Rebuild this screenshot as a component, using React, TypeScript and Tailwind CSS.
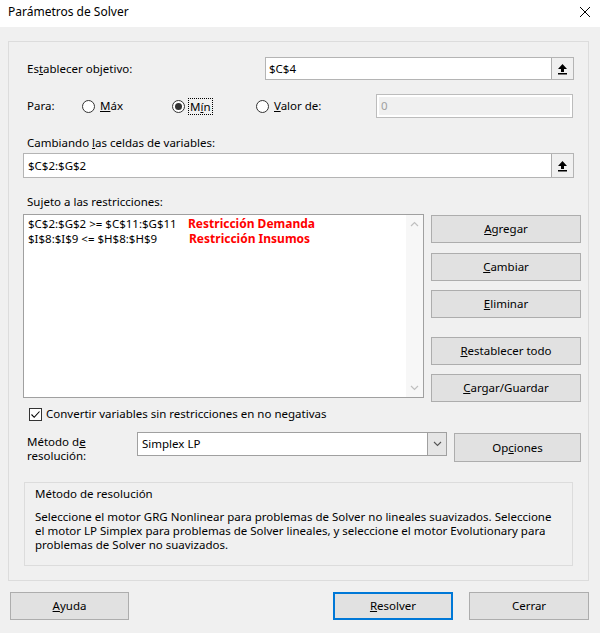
import React from 'react';

const Btn = ({ children, className = '' }: { children: React.ReactNode; className?: string }) => (
  <div className={`flex items-center justify-center h-[28px] bg-[#e1e1e1] border border-[#adadad] text-black ${className}`}>
    {children}
  </div>
);

const Radio = ({ checked }: { checked?: boolean }) => (
  <span className="flex items-center justify-center w-[13px] h-[13px] rounded-full border border-[#333333] bg-white shrink-0">
    {checked && <span className="w-[7px] h-[7px] rounded-full bg-[#333333]" />}
  </span>
);

const RefButton = () => (
  <div className="flex items-center justify-center w-[22px] h-full bg-[#f0f0f0] border-l border-[#adadad]">
    <svg width="11" height="12" viewBox="0 0 11 12">
      <path d="M5.5 1 L10 6 L7 6 L7 9 L4 9 L4 6 L1 6 Z" fill="#000" />
      <rect x="1" y="10" width="9" height="1.5" fill="#000" />
    </svg>
  </div>
);

export default function App() {
  return (
    <div className="w-[600px] h-[633px] bg-[#f0f0f0] text-[11.5px] text-black [font-family:'Noto_Sans',sans-serif] overflow-hidden">
      {/* Title bar */}
      <div className="h-[27px] bg-white flex items-center justify-between pl-[8px] pr-[9px]">
        <span className="text-[12px] -mt-[3px]">Parámetros de Solver</span>
        <svg width="12" height="12" viewBox="0 0 12 12" className="-mt-[3px]">
          <path d="M1 1 L11 11 M11 1 L1 11" stroke="#000" strokeWidth="1" />
        </svg>
      </div>

      {/* Group box */}
      <div className="ml-[8px] mt-[14px] w-[581px] h-[540px] border border-[#dcdcdc]">
        {/* Establecer objetivo */}
        <div className="mt-[15px] flex items-center h-[23px]">
          <span className="ml-[18px] w-[238px]">
            Es<u>t</u>ablecer objetivo:
          </span>
          <div className="w-[309px] h-[23px] bg-white border border-[#b4b4b4] flex items-center">
            <span className="flex-1 pl-[3px]">$C$4</span>
            <RefButton />
          </div>
        </div>

        {/* Para */}
        <div className="mt-[14px] flex items-center h-[24px]">
          <span className="ml-[18px] w-[55px]">Para:</span>
          <div className="w-[90px] flex items-center gap-[5px]">
            <Radio />
            <span><u>M</u>áx</span>
          </div>
          <div className="w-[84px] flex items-center gap-[3px]">
            <Radio checked />
            <span className="border border-dotted border-black px-[1px] leading-[15px]">M<u>í</u>n</span>
          </div>
          <div className="w-[120px] flex items-center gap-[5px]">
            <Radio />
            <span><u>V</u>alor de:</span>
          </div>
          <div className="w-[197px] h-[24px] border border-[#bcbcbc] bg-white p-[2px]">
            <div className="h-full bg-[#f0f0f0] pl-[2px] text-[#a0a0a0] flex items-center">0</div>
          </div>
        </div>

        {/* Cambiando */}
        <div className="mt-[17px] h-[16px] leading-[16px] ml-[18px]">
          Cambiando <u>l</u>as celdas de variables:
        </div>
        <div className="mt-[2px] ml-[14px] w-[551px] h-[25px] bg-white border border-[#b4b4b4] flex items-center">
          <span className="flex-1 pl-[4px]">$C$2:$G$2</span>
          <RefButton />
        </div>

        {/* Sujeto */}
        <div className="mt-[16px] h-[16px] leading-[16px] ml-[18px]">
          Su<u>j</u>eto a las restricciones:
        </div>
        <div className="mt-[4px] flex items-start">
          <div className="ml-[14px] w-[401px] h-[184px] bg-white border border-[#a0a0a0] flex">
            <div className="flex-1 pl-[4px] pt-[1px] leading-[15px]">
              <div className="flex h-[15px]">
                <span className="w-[160px]">$C$2:$G$2 &gt;= $C$11:$G$11</span>
                <span className="text-[#ff0000] font-bold text-[12px] leading-[15px]">Restricción Demanda</span>
              </div>
              <div className="flex h-[15px]">
                <span className="w-[161px]">$I$8:$I$9 &lt;= $H$8:$H$9</span>
                <span className="text-[#ff0000] font-bold text-[12px] leading-[15px]">Restricción Insumos</span>
              </div>
            </div>
            <div className="w-[17px] bg-[#f7f7f7] flex flex-col justify-between items-center py-[6px]">
              <svg width="9" height="6" viewBox="0 0 9 6">
                <path d="M1 5 L4.5 1.5 L8 5" stroke="#c0c0c0" fill="none" strokeWidth="1.2" />
              </svg>
              <svg width="9" height="6" viewBox="0 0 9 6">
                <path d="M1 1 L4.5 4.5 L8 1" stroke="#c0c0c0" fill="none" strokeWidth="1.2" />
              </svg>
            </div>
          </div>
          <div className="ml-[7px] w-[150px] mt-[1px] flex flex-col">
            <Btn><span><u>A</u>gregar</span></Btn>
            <Btn className="mt-[10px]"><span><u>C</u>ambiar</span></Btn>
            <Btn className="mt-[9px]"><span><u>E</u>liminar</span></Btn>
            <Btn className="mt-[19px]"><span><u>R</u>establecer todo</span></Btn>
            <Btn className="mt-[9px]"><span><u>C</u>argar/Guardar</span></Btn>
          </div>
        </div>

        {/* Checkbox */}
        <div className="mt-[5px] ml-[20px] h-[14px] flex items-center gap-[4px]">
          <span className="w-[13px] h-[13px] border border-[#333333] bg-white flex items-center justify-center">
            <svg width="11" height="11" viewBox="0 0 11 11">
              <path d="M1.5 5.5 L4.2 8.3 L9.5 2.5" stroke="#000" strokeWidth="1.1" fill="none" />
            </svg>
          </span>
          <span>Convertir variables sin restricciones en no negativas</span>
        </div>

        {/* Método */}
        <div className="mt-[11px] flex items-start h-[29px]">
          <div className="ml-[18px] w-[110px] mt-[3px] leading-[14px]">
            <div>Método d<u>e</u></div>
            <div>resolución:</div>
          </div>
          <div className="w-[310px] h-[24px] bg-white border border-[#a0a0a0] flex items-center">
            <span className="flex-1 pl-[4px]">Simplex LP</span>
            <div className="w-[19px] h-full bg-[#e5e5e5] border-l border-[#a0a0a0] flex items-center justify-center">
              <svg width="9" height="6" viewBox="0 0 9 6">
                <path d="M1 1 L4.5 4.5 L8 1" stroke="#555" fill="none" strokeWidth="1.1" />
              </svg>
            </div>
          </div>
          <Btn className="ml-[7px] mt-[1px] w-[127px] h-[29px]"><span>Op<u>c</u>iones</span></Btn>
        </div>

        {/* Inner group */}
        <div className="mt-[21px] ml-[15px] w-[549px] h-[84px] border border-[#dcdcdc] pl-[10px] pr-[10px] pt-[4px] leading-[14px]">
          <div>Método de resolución</div>
          <div className="mt-[9px]">
            Seleccione el motor GRG Nonlinear para problemas de Solver no lineales suavizados. Seleccione el motor LP Simplex para problemas de Solver lineales, y seleccione el motor Evolutionary para problemas de Solver no suavizados.
          </div>
        </div>
      </div>

      {/* Bottom buttons */}
      <div className="mt-[11px] flex items-center">
        <Btn className="ml-[10px] w-[119px]"><span><u>A</u>yuda</span></Btn>
        <div className="ml-[204px] w-[120px] h-[28px] bg-[#e1e1e1] border-2 border-[#0078d7] flex items-center justify-center">
          <span><u>R</u>esolver</span>
        </div>
        <Btn className="ml-[16px] w-[120px]"><span>Cerrar</span></Btn>
      </div>
    </div>
  );
}
